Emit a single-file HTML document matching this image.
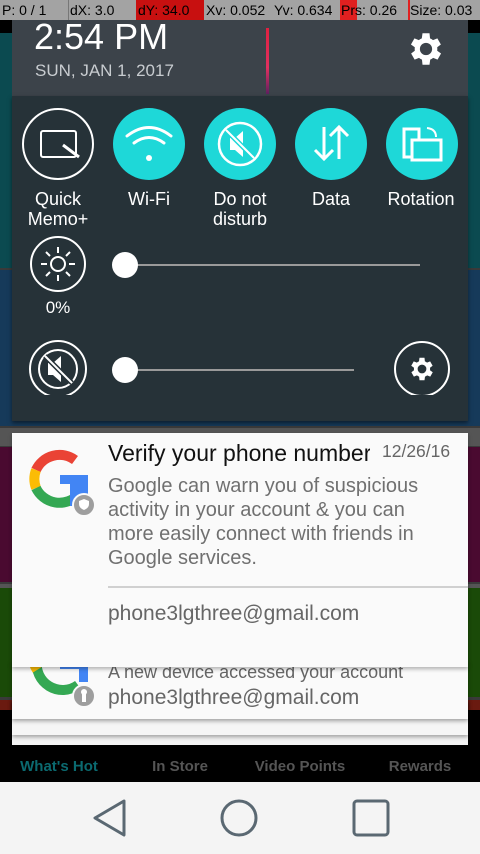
<!DOCTYPE html>
<html><head><meta charset="utf-8"><style>
*{margin:0;padding:0;box-sizing:border-box}
body{width:480px;height:854px;overflow:hidden;position:relative;background:#3a3a3a;font-family:"Liberation Sans",sans-serif}
.a{position:absolute}
.lbl{color:#fff;font-size:18px;text-align:center;line-height:20px;width:90px}
</style></head><body>
<div class="a" style="left:0;top:20px;width:480px;height:13px;background:#000"></div>
<div class="a" style="left:0;top:33px;width:480px;height:235px;background:#0b4a50"></div>
<div class="a" style="left:0;top:270px;width:480px;height:156px;background:#163a5a"></div>
<div class="a" style="left:0;top:428px;width:480px;height:18px;background:#555"></div>
<div class="a" style="left:0;top:447px;width:480px;height:135px;background:#4a0a30"></div>
<div class="a" style="left:0;top:584px;width:480px;height:4px;background:#555"></div>
<div class="a" style="left:0;top:588px;width:480px;height:109px;background:#1a4a08"></div>
<div class="a" style="left:0;top:700px;width:480px;height:10px;background:#6a1a10"></div>
<div class="a" style="left:0;top:710px;width:480px;height:72px;background:#000"></div>
<div class="a" style="left:0;top:758px;width:118px;text-align:center;color:#0b6a70;font-size:15px;font-weight:bold">What's Hot</div>
<div class="a" style="left:120px;top:758px;width:120px;text-align:center;color:#555;font-size:15px;font-weight:bold">In Store</div>
<div class="a" style="left:240px;top:758px;width:120px;text-align:center;color:#555;font-size:15px;font-weight:bold">Video Points</div>
<div class="a" style="left:360px;top:758px;width:120px;text-align:center;color:#555;font-size:15px;font-weight:bold">Rewards</div>
<div class="a" style="left:0;top:782px;width:480px;height:72px;background:#f4f4f4"></div>
<svg class="a" style="left:0;top:782px" width="480" height="72">
<path d="M124 19 L95 36 L124 53 Z" fill="none" stroke="#5a6872" stroke-width="3" stroke-linejoin="round"/>
<circle cx="239" cy="36" r="17" fill="none" stroke="#5a6872" stroke-width="3"/>
<rect x="354" y="19" width="34" height="34" rx="3" fill="none" stroke="#5a6872" stroke-width="3"/>
</svg>
<div class="a" style="left:0;top:0;width:480px;height:20px;background:#a3a3a3;font-size:14px;line-height:20px;color:#000">
<span class="a" style="left:2px">P: 0 / 1</span>
<span class="a" style="left:68px;width:1px;height:20px;background:#777"></span>
<span class="a" style="left:70px">dX: 3.0</span>
<span class="a" style="left:136px;width:68px;height:20px;background:#c81010"></span>
<span class="a" style="left:138px">dY: 34.0</span>
<span class="a" style="left:206px">Xv: 0.052</span>
<span class="a" style="left:274px">Yv: 0.634</span>
<span class="a" style="left:340px;width:17px;height:20px;background:#e02020"></span>
<span class="a" style="left:341px">Prs: 0.26</span>
<span class="a" style="left:408px;width:2px;height:20px;background:#e02020"></span>
<span class="a" style="left:410px">Size: 0.03</span>
</div>
<div class="a" style="left:12px;top:20px;width:456px;height:76px;background:#3c434a"></div>
<div class="a" style="left:34px;top:16px;color:#fff;font-size:36px">2:54 PM</div>
<div class="a" style="left:35px;top:61px;color:#c8ccd0;font-size:17px">SUN, JAN 1, 2017</div>
<div class="a" style="left:266px;top:28px;width:3px;height:66px;background:linear-gradient(#e02040,#e03060 60%,#602060)"></div>
<svg class="a" style="left:405px;top:28px" width="42" height="42" viewBox="0 0 24 24"><path fill="#fff" d="M19.4 13a7.5 7.5 0 000-2l2.1-1.6-2-3.5-2.5 1a7 7 0 00-1.7-1L15 3h-4l-.4 2.9a7 7 0 00-1.7 1l-2.5-1-2 3.5L6.6 11a7.5 7.5 0 000 2l-2.1 1.6 2 3.5 2.5-1a7 7 0 001.7 1L11 21h4l.4-2.9a7 7 0 001.7-1l2.5 1 2-3.5zM13 15.5a3.5 3.5 0 110-7 3.5 3.5 0 010 7z" transform="translate(-1 0)"/></svg>
<div class="a" style="left:12px;top:96px;width:456px;height:325px;background:#263238;box-shadow:0 2px 4px rgba(0,0,0,.5)"></div>
<svg class="a" style="left:0;top:95px" width="480" height="300">
<g fill="none" stroke="#fff" stroke-width="2">
<circle cx="58" cy="49" r="35"/>
<rect x="41" y="36" width="35" height="26" rx="2"/><path d="M63 50 L79 62" stroke-width="3"/>
</g>
<circle cx="149" cy="49" r="36" fill="#1ed8d8"/>
<circle cx="240" cy="49" r="36" fill="#1ed8d8"/>
<circle cx="331" cy="49" r="36" fill="#1ed8d8"/>
<circle cx="422" cy="49" r="36" fill="#1ed8d8"/>
<g fill="none" stroke="#fff" stroke-width="3" stroke-linecap="round">
<path d="M127 41 Q149 24 171 41"/><path d="M134 48 Q149 37 164 48"/>
</g>
<circle cx="149" cy="63" r="3" fill="#fff"/>
<circle cx="240" cy="49" r="21" fill="none" stroke="#fff" stroke-width="2.5"/>
<path d="M230 43 h5 l8 -7 v26 l-8 -7 h-5z" fill="#fff"/>
<path d="M226 35 L254 63" stroke="#1ed8d8" stroke-width="5"/><path d="M226 35 L254 63" stroke="#fff" stroke-width="2"/>
<g stroke="#fff" stroke-width="3" fill="none"><path d="M324 32 V64 M315 55 L324 64 L333 55"/><path d="M339 64 V32 M330 41 L339 32 L348 41"/></g>
<g stroke="#fff" stroke-width="3" fill="none"><path d="M412 62 H404 V34 H419 V45"/><rect x="412" y="45" width="29" height="20"/><path d="M427 33 Q436 34 436 42" stroke-width="2"/></g>
<circle cx="58" cy="169" r="27" fill="none" stroke="#fff" stroke-width="2"/>
<circle cx="58" cy="169" r="7" fill="none" stroke="#fff" stroke-width="2"/>
<g stroke="#fff" stroke-width="2"><path d="M58 152v6M58 180v6M41 169h6M69 169h6M46 157l4 4M66 177l4 4M70 157l-4 4M50 177l-4 4"/></g>
<line x1="125" y1="170" x2="420" y2="170" stroke="#9a9a9a" stroke-width="2"/>
<circle cx="125" cy="170" r="13" fill="#fff"/>
<circle cx="58" cy="274" r="28" fill="none" stroke="#fff" stroke-width="2"/>
<circle cx="58" cy="274" r="19" fill="none" stroke="#fff" stroke-width="2"/>
<path d="M48 268 h5 l8 -7 v26 l-8 -7 h-5z" fill="#fff"/>
<path d="M45 261 L72 288" stroke="#263238" stroke-width="5"/><path d="M45 261 L72 288" stroke="#fff" stroke-width="2"/>
<line x1="125" y1="275" x2="354" y2="275" stroke="#9a9a9a" stroke-width="2"/>
<circle cx="125" cy="275" r="13" fill="#fff"/>
<circle cx="422" cy="274" r="27" fill="none" stroke="#fff" stroke-width="2"/>
<g transform="translate(407 259) scale(1.25)"><path fill="#fff" d="M19.4 13a7.5 7.5 0 000-2l2.1-1.6-2-3.5-2.5 1a7 7 0 00-1.7-1L15 3h-4l-.4 2.9a7 7 0 00-1.7 1l-2.5-1-2 3.5L6.6 11a7.5 7.5 0 000 2l-2.1 1.6 2 3.5 2.5-1a7 7 0 001.7 1L11 21h4l.4-2.9a7 7 0 001.7-1l2.5 1 2-3.5zM13 15.5a3.5 3.5 0 110-7 3.5 3.5 0 010 7z" transform="translate(-1 0)"/></g>
</svg>
<div class="a lbl" style="left:13px;top:189px">Quick<br>Memo+</div>
<div class="a lbl" style="left:104px;top:189px">Wi-Fi</div>
<div class="a lbl" style="left:195px;top:189px">Do not<br>disturb</div>
<div class="a lbl" style="left:286px;top:189px">Data</div>
<div class="a lbl" style="left:376px;top:189px">Rotation</div>
<div class="a lbl" style="left:13px;top:298px;font-size:17px">0%</div>
<div class="a" style="left:12px;top:700px;width:456px;height:45px;background:#f4f4f4;box-shadow:0 2px 3px rgba(0,0,0,.4)"></div>
<div class="a" style="left:12px;top:700px;width:456px;height:35px;background:#f6f6f6;box-shadow:0 2px 4px rgba(0,0,0,.35)"></div>
<div class="a" style="left:12px;top:660px;width:456px;height:59px;background:#fafafa;box-shadow:0 2px 4px rgba(0,0,0,.35);overflow:hidden">
<div class="a" style="left:96px;top:2px;color:#666;font-size:18px">A new device accessed your account</div>
<div class="a" style="left:96px;top:26px;color:#666;font-size:21px">phone3lgthree@gmail.com</div>
</div>
<svg class="a" style="left:28px;top:620px" width="70" height="90"><g fill="none" stroke-width="10"><path d="M9 40 A26 26 0 0 0 50 65" stroke="#34a853"/><path d="M5 36 A26 26 0 0 0 9 50" stroke="#fbbc05"/></g><rect x="32" y="40" width="28" height="9" fill="#4285f4"/><path d="M51 40 h9 v22 h-9z" fill="#4285f4"/><circle cx="56" cy="76" r="11" fill="#9e9e9e" stroke="#fafafa" stroke-width="2"/><rect x="54" y="73" width="4" height="9" fill="#fff"/><circle cx="56" cy="72" r="3" fill="#fff"/></svg>
<div class="a" style="left:12px;top:433px;width:456px;height:234px;background:#fafafa;box-shadow:0 2px 4px rgba(0,0,0,.3)"></div>
<svg class="a" style="left:28px;top:448px" width="70" height="70"><g fill="none" stroke-width="10"><path d="M47 12 A26 26 0 0 0 8 22" stroke="#ea4335"/><path d="M8 22 A26 26 0 0 0 8 40" stroke="#fbbc05"/><path d="M8 40 A26 26 0 0 0 50 47" stroke="#34a853"/></g><path d="M32 27 h28 v9 h-9 v22 h-9 v-22 h-10z" fill="#4285f4"/><path d="M51 28 h9 v26 h-9z" fill="#4285f4"/><circle cx="56" cy="57" r="11" fill="#9e9e9e" stroke="#fafafa" stroke-width="2"/><path d="M51 53 l5 -2 5 2 v3 q0 4 -5 6 q-5 -2 -5 -6z" fill="#fff"/></svg>
<div class="a" style="left:108px;top:440px;width:262px;color:#111;font-size:23px;white-space:nowrap;overflow:hidden">Verify your phone number</div>
<div class="a" style="left:382px;top:441px;color:#666;font-size:17.5px">12/26/16</div>
<div class="a" style="left:108px;top:474px;width:350px;color:#707070;font-size:20px;line-height:24px">Google can warn you of suspicious<br>activity in your account &amp; you can<br>more easily connect with friends in<br>Google services.</div>
<div class="a" style="left:108px;top:586px;width:360px;height:2px;background:#d0d0d0"></div>
<div class="a" style="left:108px;top:602px;color:#666;font-size:21px">phone3lgthree@gmail.com</div>
</body></html>
